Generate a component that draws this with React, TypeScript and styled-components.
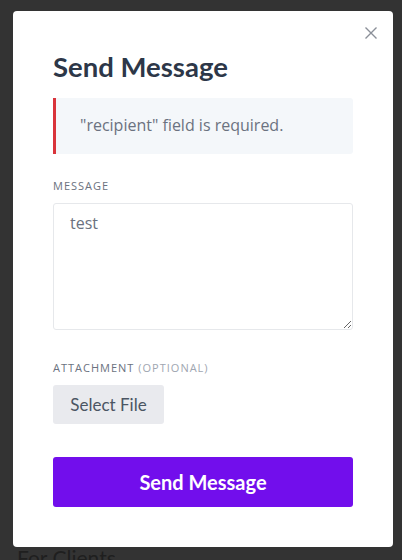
import React from 'react';
import styled, { createGlobalStyle } from 'styled-components';

const GlobalStyle = createGlobalStyle`
  html, body {
    margin: 0;
    padding: 0;
    height: 100%;
    overflow: hidden;
    background: #333333;
  }
  * {
    box-sizing: border-box;
  }
`;

const Backdrop = styled.div`
  display: flex;
  flex-direction: column;
  padding: 11px 9px 0 13px;
`;

const BehindHeading = styled.div`
  margin: -1px 0 0 4px;
  font-family: 'Lato', 'Liberation Sans', sans-serif;
  font-size: 21px;
  line-height: 24px;
  color: #1f1f1f;
`;

const Modal = styled.div`
  position: relative;
  z-index: 1;
  display: flex;
  flex-direction: column;
  width: 380px;
  padding: 40px;
  background: #ffffff;
  border-radius: 4px;
`;

const CloseButton = styled.button`
  position: absolute;
  top: 16px;
  right: 16px;
  width: 12px;
  height: 12px;
  padding: 0;
  border: none;
  background: none;
  display: flex;
  cursor: pointer;
`;

const Title = styled.h2`
  margin: 0 0 15px;
  font-family: 'Lato', 'Liberation Sans', sans-serif;
  font-weight: 700;
  font-size: 27.5px;
  line-height: 32px;
  color: #2d3748;
`;

const Alert = styled.div`
  display: flex;
  align-items: center;
  height: 56px;
  padding: 0 0 2px 24px;
  border-left: 3px solid #d9343b;
  border-radius: 0 3px 3px 0;
  background: #f4f7fa;
  font-family: 'Open Sans', 'Liberation Sans', sans-serif;
  font-size: 16px;
  color: #6b7280;
`;

const Label = styled.label<{ $spaceTop: number }>`
  display: block;
  margin: ${p => p.$spaceTop}px 0 9px;
  font-family: 'Open Sans', 'Liberation Sans', sans-serif;
  font-size: 11px;
  line-height: 16px;
  letter-spacing: 1px;
  text-transform: uppercase;
  color: #6b7280;
`;

const Optional = styled.span`
  color: #a0a6b1;
`;

const TextArea = styled.textarea`
  display: block;
  width: 100%;
  height: 127px;
  padding: 7px 16px;
  border: 1px solid #e6e8eb;
  border-radius: 3px;
  resize: vertical;
  font-family: 'Open Sans', 'Liberation Sans', sans-serif;
  font-size: 16px;
  line-height: 24px;
  color: #6b7280;
  outline: none;
`;

const FileButton = styled.button`
  align-self: flex-start;
  width: 111px;
  height: 39px;
  padding: 0;
  border: none;
  border-radius: 3px;
  background: #e9eaee;
  font-family: 'Lato', 'Liberation Sans', sans-serif;
  font-size: 17px;
  color: #4b5563;
  cursor: pointer;
`;

const SubmitButton = styled.button`
  margin-top: 33px;
  height: 50px;
  border: none;
  border-radius: 3px;
  background: #720eec;
  font-family: 'Lato', 'Liberation Sans', sans-serif;
  font-weight: 700;
  font-size: 20px;
  color: #ffffff;
  cursor: pointer;
`;

const CloseIcon = () => (
  <svg width="12" height="12" viewBox="0 0 12 12" fill="none">
    <path d="M0.5 0.5L11.5 11.5M11.5 0.5L0.5 11.5" stroke="#8a8f98" strokeWidth="1.4" />
  </svg>
);

export default function App() {
  return (
    <>
      <GlobalStyle />
      <Backdrop>
        <Modal>
          <CloseButton aria-label="Close">
            <CloseIcon />
          </CloseButton>
          <Title>Send Message</Title>
          <Alert>"recipient" field is required.</Alert>
          <Label $spaceTop={24} htmlFor="message">Message</Label>
          <TextArea id="message" defaultValue="test" />
          <Label $spaceTop={30}>
            Attachment <Optional>(optional)</Optional>
          </Label>
          <FileButton>Select File</FileButton>
          <SubmitButton>Send Message</SubmitButton>
        </Modal>
        <BehindHeading>For Clients</BehindHeading>
      </Backdrop>
    </>
  );
}
